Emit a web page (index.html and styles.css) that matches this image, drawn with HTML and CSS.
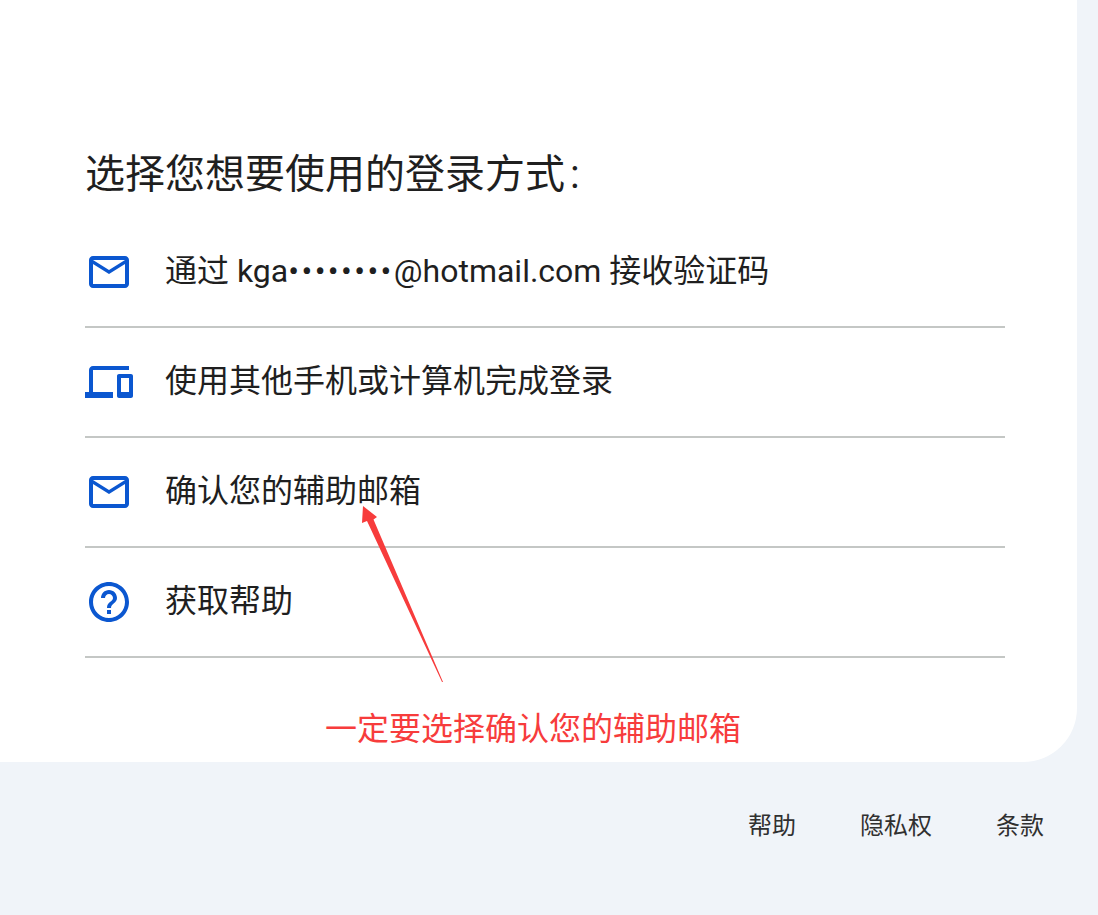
FILE: index.html
```html
<!DOCTYPE html>
<html lang="zh-CN">
<head>
    <meta charset="UTF-8">
    <meta name="viewport" content="width=device-width, initial-scale=1.0">
    <title>选择登录方式</title>
    <link rel="stylesheet" href="styles.css">
</head>
<body>
    <div class="card">
        <div class="title">选择您想要使用的登录方式<span class="colon">:</span></div>
        <div class="option">
            <svg class="icon" viewBox="0 0 24 24"><path d="M20 4H4c-1.1 0-2 .9-2 2v12c0 1.1.9 2 2 2h16c1.1 0 2-.9 2-2V6c0-1.1-.9-2-2-2zm0 14H4V8l8 5 8-5v10zm-8-7L4 6h16l-8 5z"/></svg>
            <span class="label">通过 kga<span class="dots">••••••••</span>@hotmail.com 接收验证码</span>
        </div>
        <div class="option">
            <svg class="icon" viewBox="0 0 24 24"><path d="M4 6h18V4H4c-1.1 0-2 .9-2 2v11H0v3h14v-3H4V6zm19 2h-6c-.55 0-1 .45-1 1v10c0 .55.45 1 1 1h6c.55 0 1-.45 1-1V9c0-.55-.45-1-1-1zm-1 9h-4v-7h4v7z"/></svg>
            <span class="label">使用其他手机或计算机完成登录</span>
        </div>
        <div class="option">
            <svg class="icon" viewBox="0 0 24 24"><path d="M20 4H4c-1.1 0-2 .9-2 2v12c0 1.1.9 2 2 2h16c1.1 0 2-.9 2-2V6c0-1.1-.9-2-2-2zm0 14H4V8l8 5 8-5v10zm-8-7L4 6h16l-8 5z"/></svg>
            <span class="label">确认您的辅助邮箱</span>
        </div>
        <div class="option">
            <svg class="icon" viewBox="0 0 24 24"><path d="M11 18h2v-2h-2v2zm1-16C6.48 2 2 6.48 2 12s4.48 10 10 10 10-4.48 10-10S17.52 2 12 2zm0 18c-4.41 0-8-3.59-8-8s3.59-8 8-8 8 3.59 8 8-3.59 8-8 8zm0-14c-2.21 0-4 1.79-4 4h2c0-1.1.9-2 2-2s2 .9 2 2c0 2-3 1.75-3 5h2c0-2.25 3-2.5 3-5 0-2.21-1.79-4-4-4z"/></svg>
            <span class="label">获取帮助</span>
        </div>
        <svg class="arrow" viewBox="0 0 90 185"><polygon points="3,1 17,12 13.5,14.5 83,177 82,177 7,16 2,18"/></svg>
        <div class="note">一定要选择确认您的辅助邮箱</div>
    </div>
    <div class="footer">
        <span>帮助</span>
        <span>隐私权</span>
        <span>条款</span>
    </div>
</body>
</html>
```

FILE: styles.css
```css
body {
    margin: 0;
    height: 915px;
    overflow: hidden;
    font-family: Roboto, 'Noto Sans CJK SC', sans-serif;
    background-color: #f0f4f9;
    color: #1f1f1f;
}
.card {
    position: relative;
    box-sizing: border-box;
    width: 1077px;
    height: 762px;
    padding: 151px 72px 0 85px;
    background-color: white;
    border-bottom-right-radius: 54px;
}
.title {
    font-size: 40px;
    line-height: 48px;
    margin-bottom: 19px;
}
.colon {
    margin-left: 5px;
}
.option {
    display: flex;
    align-items: center;
    gap: 32px;
    height: 110px;
    box-sizing: border-box;
    font-size: 32px;
    border-bottom: 2px solid #c4c7c5;
}
.label {
    margin-bottom: 8px;
}
.dots {
    letter-spacing: 2.4px;
}
.icon {
    width: 48px;
    height: 48px;
    fill: #0b57d0;
    flex-shrink: 0;
}
.arrow {
    position: absolute;
    left: 360px;
    top: 505px;
    width: 90px;
    height: 185px;
    fill: #f73c3c;
}
.note {
    position: absolute;
    left: 325px;
    top: 705px;
    font-size: 32px;
    line-height: 48px;
    color: #f73c3c;
}
.footer {
    display: flex;
    justify-content: flex-end;
    gap: 64px;
    padding: 44px 54px 0 0;
    font-size: 24px;
    line-height: 40px;
    color: #303030;
}
```
